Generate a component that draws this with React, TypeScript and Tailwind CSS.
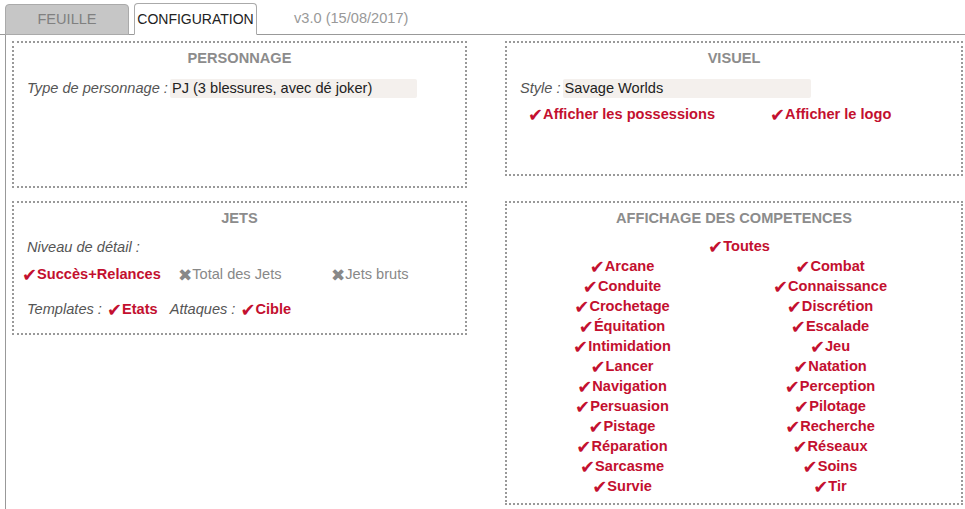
const RED = 'text-[#c3102f]'

function Check({ label, className = '' }: { label: string; className?: string }) {
  return (
    <span className={`inline-flex items-center font-bold ${RED} ${className}`}>
      <span className="font-['DejaVu_Sans',sans-serif] font-bold text-[18px] leading-[14px] h-[14px]">✔</span>
      {label}
    </span>
  )
}

function Cross({ label, className = '' }: { label: string; className?: string }) {
  return (
    <span className={`inline-flex items-center text-[#888] ${className}`}>
      <span className="font-['DejaVu_Sans',sans-serif] text-[17px] leading-[14px] h-[14px]">✖</span>
      {label}
    </span>
  )
}

function Box({ title, className = '', children }: { title: string; className?: string; children?: React.ReactNode }) {
  return (
    <div className={`border-2 border-dotted border-[#999] px-[13px] pt-[5px] ${className}`}>
      <div className="text-center font-bold text-[#8c8c8c] leading-[20px]">{title}</div>
      {children}
    </div>
  )
}

const SKILLS: [string, string][] = [
  ['Arcane', 'Combat'],
  ['Conduite', 'Connaissance'],
  ['Crochetage', 'Discrétion'],
  ['Équitation', 'Escalade'],
  ['Intimidation', 'Jeu'],
  ['Lancer', 'Natation'],
  ['Navigation', 'Perception'],
  ['Persuasion', 'Pilotage'],
  ['Pistage', 'Recherche'],
  ['Réparation', 'Réseaux'],
  ['Sarcasme', 'Soins'],
  ['Survie', 'Tir'],
]

export default function App() {
  return (
    <div className="w-[965px] h-[509px] overflow-hidden bg-white font-['Liberation_Sans',Arial,sans-serif] text-[14.6px] text-[#222]">
      {/* Tabs */}
      <div className="flex items-end h-[35px] pl-[5px] border-b border-[#999]">
        <div className="w-[124px] h-[31px] -mb-px flex items-center justify-center bg-[#c6c6c6] border border-[#aaa] rounded-t-[4px] text-[#808080]">
          FEUILLE
        </div>
        <div className="ml-[5px] w-[123px] h-[32px] -mb-px flex items-center justify-center bg-white border border-[#aaa] border-b-white rounded-t-[4px] text-[#222] text-[14px]">
          CONFIGURATION
        </div>
        <div className="ml-[37px] h-[31px] flex items-center text-[#999]">v3.0 (15/08/2017)</div>
      </div>

      {/* Content */}
      <div className="ml-[5px] h-full border-l border-[#999] pl-[6px] pt-[6px]">
        <div className="grid grid-cols-[455px_458px] gap-x-[38px] gap-y-[13px] items-start">
          <Box title="PERSONNAGE" className="h-[147px]">
            <div className="mt-[11px] flex items-center h-[19px]">
              <span className="italic text-[#555]">Type de personnage :</span>
              <span className="ml-[2px] w-[247px] h-[19px] bg-[#f4f0ed] rounded-[2px] px-[2px] flex items-center text-[#222]">
                PJ (3 blessures, avec dé joker)
              </span>
            </div>
          </Box>

          <Box title="VISUEL" className="h-[135px]">
            <div className="mt-[11px] flex items-center h-[19px]">
              <span className="italic text-[#555]">Style :</span>
              <span className="ml-[2px] w-[248px] h-[19px] bg-[#f4f0ed] rounded-[2px] px-[2px] flex items-center text-[#222]">
                Savage Worlds
              </span>
            </div>
            <div className="mt-[7px] ml-[8px] flex h-[20px] items-center">
              <Check label="Afficher les possessions" className="w-[242px]" />
              <Check label="Afficher le logo" />
            </div>
          </Box>

          <Box title="JETS" className="h-[134px]">
            <div className="mt-[9px] leading-[20px] italic text-[#555]">Niveau de détail :</div>
            <div className="mt-[8px] -ml-[5px] flex h-[20px] items-center">
              <Check label="Succès+Relances" className="w-[156px]" />
              <Cross label="Total des Jets" className="w-[153px]" />
              <Cross label="Jets bruts" />
            </div>
            <div className="mt-[15px] flex h-[20px] items-center">
              <span className="italic text-[#555]">Templates :</span>
              <Check label="Etats" className="ml-[5px]" />
              <span className="ml-[12px] italic text-[#555]">Attaques :</span>
              <Check label="Cible" className="ml-[5px]" />
            </div>
          </Box>

          <Box title="AFFICHAGE DES COMPETENCES" className="h-[304px]">
            <div className="mt-[9px] flex justify-center pl-[10px] h-[20px] items-center">
              <Check label="Toutes" />
            </div>
            <div className="-ml-[2px] grid grid-cols-[208px_208px]">
              {SKILLS.map(([a, b]) => (
                <div key={a} className="contents">
                  <div className="flex justify-center h-[20px] items-center">
                    <Check label={a} />
                  </div>
                  <div className="flex justify-center h-[20px] items-center">
                    <Check label={b} />
                  </div>
                </div>
              ))}
            </div>
          </Box>
        </div>
      </div>
    </div>
  )
}
